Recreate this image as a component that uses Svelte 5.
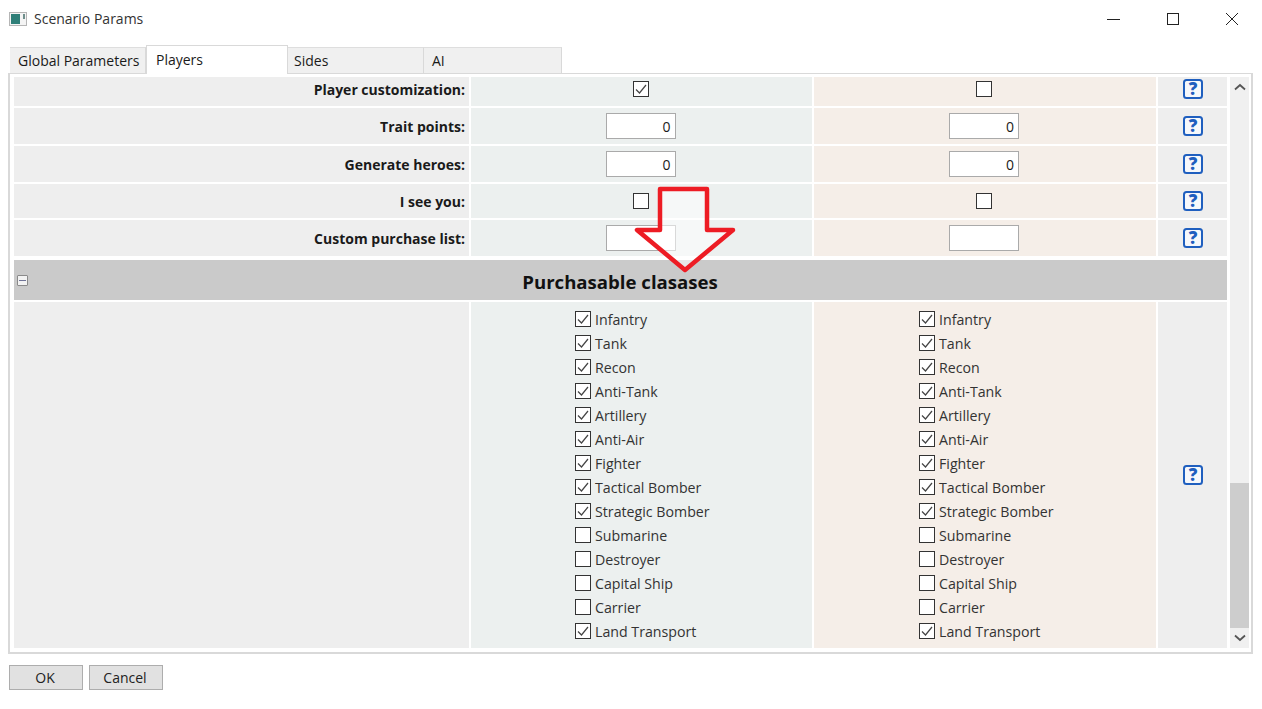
<script>
  const rows = [
    { label: "Player customization:", kind: "check", a: true, b: false, h: 29, top: true },
    { label: "Trait points:", kind: "num", a: "0", b: "0", h: 36 },
    { label: "Generate heroes:", kind: "num", a: "0", b: "0", h: 36 },
    { label: "I see you:", kind: "check", a: false, b: false, h: 34 },
    { label: "Custom purchase list:", kind: "text", a: "", b: "", h: 36 }
  ];

  const classes = [
    ["Infantry", true],
    ["Tank", true],
    ["Recon", true],
    ["Anti-Tank", true],
    ["Artillery", true],
    ["Anti-Air", true],
    ["Fighter", true],
    ["Tactical Bomber", true],
    ["Strategic Bomber", true],
    ["Submarine", false],
    ["Destroyer", false],
    ["Capital Ship", false],
    ["Carrier", false],
    ["Land Transport", true]
  ];
</script>

{#snippet tick()}
  <svg class="tick" viewBox="0 0 14 14" width="14" height="14">
    <path d="M2 7.5 L5.5 11 L12 3" fill="none" stroke="#444" stroke-width="1.2" />
  </svg>
{/snippet}

{#snippet help()}
  <svg viewBox="0 0 22 22" width="22" height="22">
    <rect x="2" y="2" width="18" height="18" rx="2.5" fill="#f6f8fb" stroke="#1f5fbf" stroke-width="2" />
    <text x="11" y="16.8" text-anchor="middle" class="qmark">?</text>
  </svg>
{/snippet}

{#snippet field(row, value)}
  {#if row.kind === "check"}
    <span class="box big">{#if value}{@render tick()}{/if}</span>
  {:else}
    <span class="input">{value}</span>
  {/if}
{/snippet}

<div class="window">
  <header class="titlebar">
    <svg class="appicon" viewBox="0 0 18 16" width="18" height="16">
      <rect x="0.5" y="1.5" width="17" height="13" fill="#f4f4f4" stroke="#b5b5b5" />
      <rect x="2" y="3" width="9" height="10" fill="#2f7f78" />
      <rect x="14" y="3" width="2" height="5" fill="#6f8f8c" />
    </svg>
    <span class="title">Scenario Params</span>
    <div class="controls">
      <svg viewBox="0 0 14 14" width="14" height="14"><path d="M0 7.5H13" stroke="#222" /></svg>
      <svg viewBox="0 0 14 14" width="14" height="14"><rect x="1.5" y="1.5" width="11" height="11" fill="none" stroke="#222" /></svg>
      <svg viewBox="0 0 14 14" width="14" height="14"><path d="M1 1L13 13M13 1L1 13" stroke="#222" /></svg>
    </div>
  </header>

  <nav class="tabs">
    <div class="tab first">Global Parameters</div>
    <div class="tab active">Players</div>
    <div class="tab sides">Sides</div>
    <div class="tab ai">AI</div>
  </nav>

  <main class="panel">
    <div class="content">
      {#each rows as row}
        <div class="row" class:top={row.top} style="height:{row.h}px">
          <div class="cell label">{row.label}</div>
          <div class="cell green">{@render field(row, row.a)}</div>
          <div class="cell peach">{@render field(row, row.b)}</div>
          <div class="cell plain">{@render help()}</div>
        </div>
      {/each}

      <div class="group">
        <span class="collapse"></span>
        Purchasable clasases
      </div>

      <div class="row list">
        <div class="cell plain"></div>
        {#each ["green", "peach"] as side}
          <div class="cell {side} listcell">
            <ul>
              {#each classes as [name, on]}
                <li><span class="box">{#if on}{@render tick()}{/if}</span>{name}</li>
              {/each}
            </ul>
          </div>
        {/each}
        <div class="cell plain helpcell">{@render help()}</div>
      </div>
    </div>

    <div class="scrollbar">
      <svg class="arrow" viewBox="0 0 12 8" width="12" height="8"><path d="M1 6.5L6 2L11 6.5" fill="none" stroke="#555" stroke-width="1.8" /></svg>
      <div class="track"><div class="thumb"></div></div>
      <svg class="arrow" viewBox="0 0 12 8" width="12" height="8"><path d="M1 1.5L6 6L11 1.5" fill="none" stroke="#555" stroke-width="1.8" /></svg>
    </div>
  </main>

  <footer class="buttons">
    <button>OK</button>
    <button>Cancel</button>
  </footer>

  <svg class="callout" viewBox="0 0 106 90" width="106" height="90">
    <path
      d="M26 3H73V44H99L51 84L3 44H26Z"
      fill="rgba(255,255,255,0.55)"
      stroke="#ed1c24"
      stroke-width="4.5"
      stroke-linejoin="round"
    />
  </svg>
</div>

<style>
  :global(body) {
    background: #fff;
  }
  .window {
    position: relative;
    width: 1262px;
    height: 709px;
    overflow: hidden;
    background: #fff;
    color: #1a1a1a;
    font-family: "Open Sans", "Noto Sans", sans-serif;
    font-size: 14px;
  }
  .titlebar {
    display: flex;
    align-items: center;
    height: 37px;
    padding-left: 9px;
  }
  .appicon {
    margin-right: 7px;
  }
  .title {
    margin-top: -1px;
    font-size: 14px;
    color: #333;
  }
  .controls {
    display: flex;
    gap: 45px;
    margin-left: auto;
    margin-right: 23px;
  }
  .tabs {
    display: flex;
    align-items: flex-end;
    height: 36px;
    padding-left: 10px;
  }
  .tab {
    box-sizing: border-box;
    height: 26px;
    padding: 3px 0 0 8px;
    background: #f0f0f0;
    border-top: 1px solid #dedede;
    border-right: 1px solid #d9d9d9;
  }
  .first {
    width: 136px;
  }
  .sides {
    width: 136px;
    padding-left: 6px;
  }
  .ai {
    width: 138px;
    padding-left: 8px;
  }
  .tab.active {
    width: 142px;
    height: 29px;
    margin-bottom: -1px;
    position: relative;
    z-index: 1;
    padding: 4px 0 0 9px;
    background: #fff;
    border: 1px solid #d9d9d9;
    border-bottom: none;
  }
  .panel {
    box-sizing: border-box;
    display: flex;
    width: 1245px;
    height: 581px;
    margin-left: 8px;
    padding: 3px 2px 4px 4px;
    border: 1px solid #d9d9d9;
    border-width: 1px 2px 2px 2px;
  }
  .content {
    display: flex;
    flex-direction: column;
    gap: 2px;
    width: 1213px;
    flex: none;
  }
  .row {
    display: grid;
    grid-template-columns: 455px 341px 342px 69px;
    gap: 2px;
  }
  .row.top .cell {
    padding-bottom: 5px;
  }
  .list {
    height: 346px;
  }
  .cell {
    box-sizing: border-box;
    display: flex;
    align-items: center;
    justify-content: center;
  }
  .label {
    justify-content: flex-end;
    padding-right: 4px;
    background: #eeeeee;
    font-weight: 700;
  }
  .green {
    padding-right: 2px;
    background: #ecf0ef;
  }
  .peach {
    padding-right: 2px;
    background: #f5eee8;
  }
  .plain {
    background: #eeeeee;
  }
  .box {
    box-sizing: border-box;
    display: inline-flex;
    width: 16px;
    height: 16px;
    flex: none;
    align-items: center;
    justify-content: center;
    border: 1px solid #333;
    background: #fff;
  }
  .input {
    box-sizing: border-box;
    width: 70px;
    height: 26px;
    padding: 3px 4px 0;
    text-align: right;
    background: #fff;
    border: 1px solid #aaa;
  }
  .group {
    position: relative;
    height: 40px;
    margin-top: 2px;
    padding-right: 1px;
    text-align: center;
    line-height: 44px;
    font-size: 18.6px;
    font-weight: 700;
    color: #111;
    background: #cacaca;
  }
  .collapse {
    position: absolute;
    left: 3px;
    top: 15px;
    box-sizing: border-box;
    width: 11px;
    height: 11px;
    background: linear-gradient(#6f7396, #6f7396) center / 7px 1px no-repeat, #f2f2f2;
    border: 1px solid #8a8a8a;
    border-radius: 1px;
  }
  .listcell {
    justify-content: flex-start;
    align-items: flex-start;
  }
  .green.listcell ul {
    margin-left: 104px;
  }
  .peach.listcell ul {
    margin-left: 105px;
  }
  ul {
    list-style: none;
    margin: 5px 0 0;
    padding: 0;
  }
  li {
    display: flex;
    align-items: center;
    gap: 4px;
    height: 24px;
    font-size: 14.2px;
    color: #333;
  }
  .qmark {
    font-family: "Open Sans", sans-serif;
    font-size: 17px;
    font-weight: 800;
    fill: #1f5fbf;
  }
  .scrollbar {
    display: flex;
    flex-direction: column;
    align-items: center;
    width: 20px;
    margin-left: 3px;
    background: #f0f0f0;
  }
  .arrow {
    flex: none;
    margin: 6px 0;
  }
  .track {
    flex: 1;
    display: flex;
    align-items: flex-end;
    width: 100%;
  }
  .thumb {
    width: 100%;
    height: 145px;
    background: #cdcdcd;
  }
  .buttons {
    display: flex;
    gap: 6px;
    padding: 11px 0 0 9px;
  }
  button {
    width: 74px;
    height: 25px;
    padding: 0 2px 0 0;
    font: inherit;
    color: #222;
    background: #e1e1e1;
    border: 1px solid #adadad;
  }
  .callout {
    position: absolute;
    left: 634px;
    top: 186px;
  }
</style>
